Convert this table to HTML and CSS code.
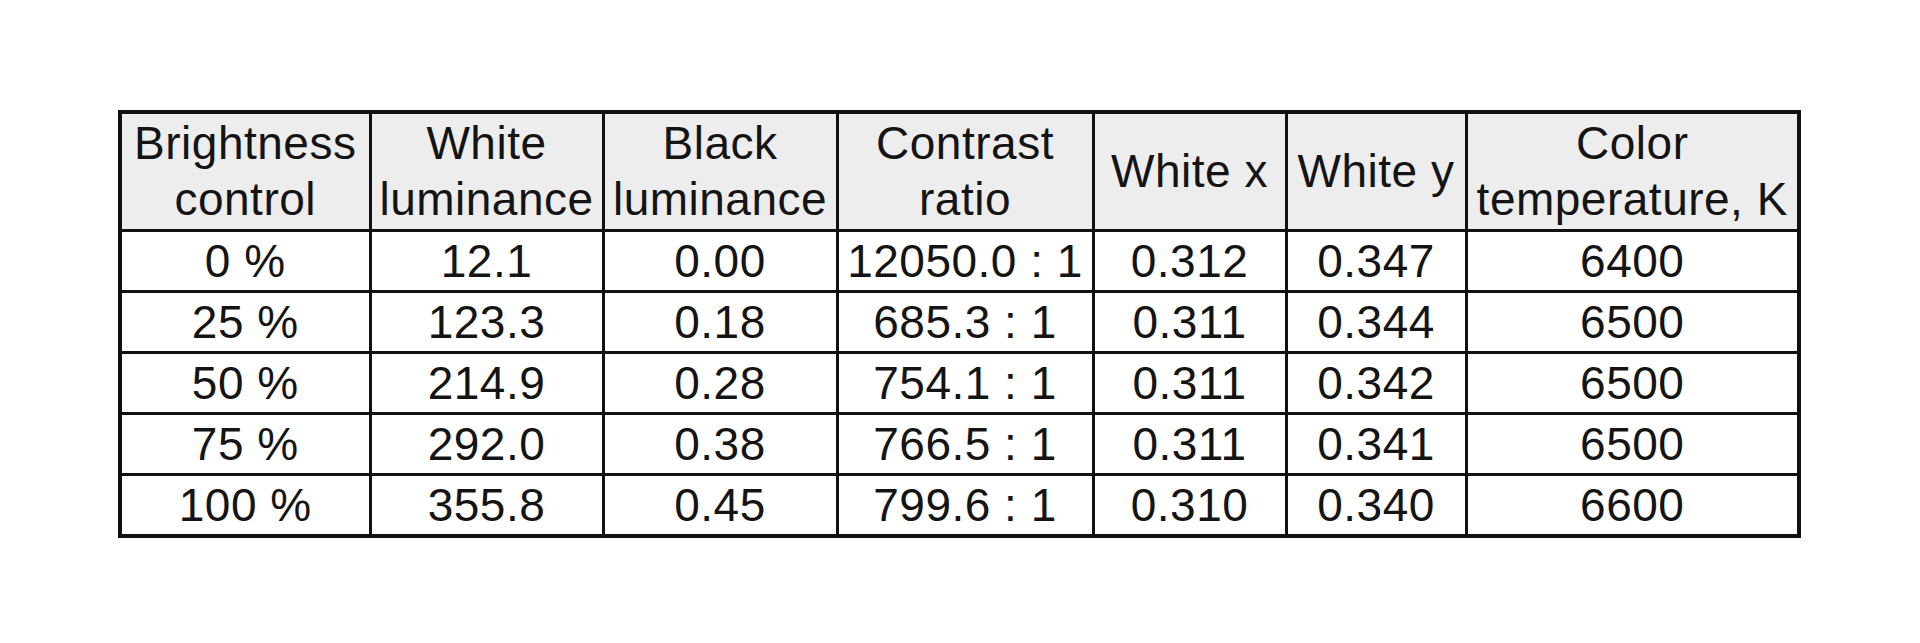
FILE: index.html
```html
<!DOCTYPE html>
<html>
<head>
<meta charset="utf-8">
<link rel="stylesheet" href="styles.css">
</head>
<body>
<div class="page">
<table class="data">
<colgroup>
<col class="c1"><col class="c2"><col class="c3"><col class="c4"><col class="c5"><col class="c6"><col class="c7">
</colgroup>
<thead>
<tr class="head">
<th>Brightness<br>control</th>
<th>White<br>luminance</th>
<th>Black<br>luminance</th>
<th>Contrast<br>ratio</th>
<th>White x</th>
<th>White y</th>
<th>Color<br>temperature, K</th>
</tr>
</thead>
<tbody>
<tr><td>0 %</td><td>12.1</td><td>0.00</td><td>12050.0 : 1</td><td>0.312</td><td>0.347</td><td>6400</td></tr>
<tr><td>25 %</td><td>123.3</td><td>0.18</td><td>685.3 : 1</td><td>0.311</td><td>0.344</td><td>6500</td></tr>
<tr><td>50 %</td><td>214.9</td><td>0.28</td><td>754.1 : 1</td><td>0.311</td><td>0.342</td><td>6500</td></tr>
<tr><td>75 %</td><td>292.0</td><td>0.38</td><td>766.5 : 1</td><td>0.311</td><td>0.341</td><td>6500</td></tr>
<tr><td>100 %</td><td>355.8</td><td>0.45</td><td>799.6 : 1</td><td>0.310</td><td>0.340</td><td>6600</td></tr>
</tbody>
</table>
</div>
</body>
</html>
```

FILE: styles.css
```css
html, body {
  margin: 0;
  padding: 0;
  background: #ffffff;
}
.page {
  padding: 110px 0 0 118px;
}
.data {
  border-collapse: collapse;
  table-layout: fixed;
  width: 1679px;
  border: 4px solid #111;
  font-family: "Liberation Sans", Arial, sans-serif;
  font-size: 46px;
  letter-spacing: 0.5px;
  color: #141414;
}
.c1 { width: 250px; }
.c2 { width: 233px; }
.c3 { width: 234px; }
.c4 { width: 256px; }
.c5 { width: 193px; }
.c6 { width: 180px; }
.c7 { width: 333px; }
.data th, .data td {
  border: 3px solid #111;
  padding: 0;
  text-align: center;
  font-weight: normal;
  white-space: nowrap;
  overflow: visible;
}
.data th {
  background: #ededed;
  line-height: 56px;
}
.head {
  height: 118px;
}
.data td {
  height: 58px;
  line-height: 58px;
}
```
